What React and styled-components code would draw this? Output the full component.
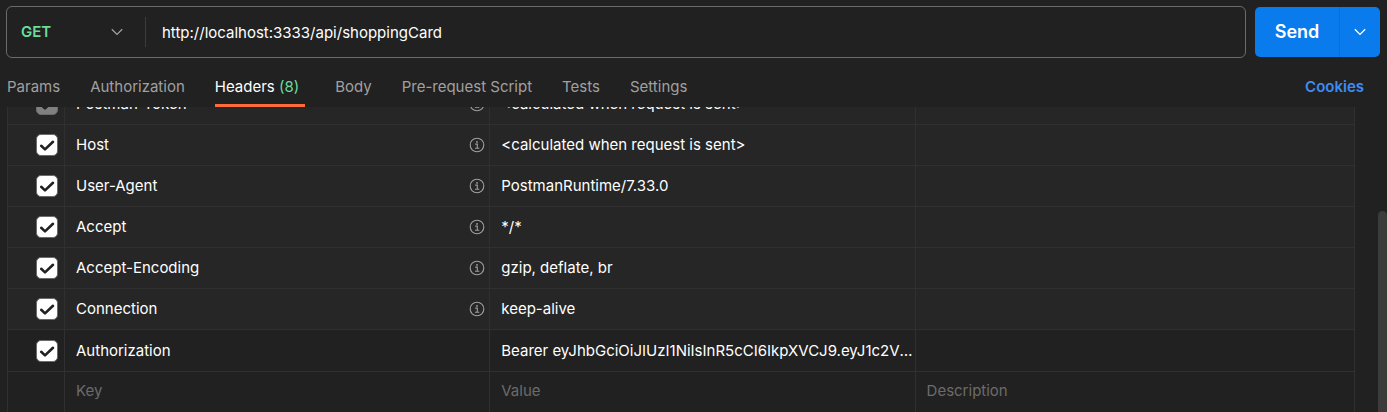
import React from "react";
import styled, { createGlobalStyle, css } from "styled-components";

const font = `Inter, "Liberation Sans", sans-serif`;
const line = "#303030";

const GlobalStyle = createGlobalStyle`
  *, *::before, *::after { box-sizing: border-box; }
  body { margin: 0; background: #212121; color: #fff; font: 15px/20px ${font}; }
  button, input, select { font: inherit; color: inherit; }
`;

const Page = styled.main`
  display: flex;
  flex-direction: column;
  height: 100vh;
  overflow: hidden;
`;

const RequestBar = styled.form`
  display: flex;
  align-items: center;
  gap: 9px;
  padding: 6px 7px 0 6px;
`;

const UrlBox = styled.div`
  display: flex;
  flex: 1;
  align-items: center;
  height: 52px;
  border: 1px solid #6b6b6b;
  border-radius: 6px;
`;

const MethodPicker = styled.div`
  display: grid;
  align-items: center;
  width: 139px;
  height: 30px;
  border-right: 1px solid #3c3c3c;

  > * { grid-area: 1 / 1; }
  > svg { justify-self: end; margin-right: 22px; pointer-events: none; }
`;

const MethodSelect = styled.select`
  appearance: none;
  height: 30px;
  padding: 0 14px;
  border: 0;
  outline: 0;
  background: transparent;
  color: #6bdd9a;
  font-weight: 600;
`;

const UrlInput = styled.input`
  flex: 1;
  min-width: 0;
  height: 30px;
  padding: 0 16px;
  border: 0;
  outline: 0;
  background: transparent;
`;

const SendGroup = styled.div`
  display: flex;
  height: 50px;
  border-radius: 5px;
  overflow: hidden;
`;

const SendButton = styled.button`
  width: 84px;
  padding: 0;
  border: 0;
  background: #097bed;
  font-size: 18px;
  font-weight: 600;
`;

const SendMenuButton = styled.button`
  display: grid;
  place-items: center;
  width: 41px;
  padding: 0;
  border: 0;
  border-left: 1px solid #0a6fd4;
  background: #097bed;
`;

const TabBar = styled.div`
  display: flex;
  align-items: flex-start;
  justify-content: space-between;
  padding: 19px 23px 0 7px;
`;

const Tabs = styled.nav`
  display: flex;
  gap: 30px;
`;

const Tab = styled.button`
  padding: 0 0 7px;
  border: 0;
  border-bottom: 3px solid transparent;
  background: none;
  line-height: 20px;
  color: #a0a0a0;
  ${(p) =>
    p.$active &&
    css`
      padding-right: 6px;
      border-color: #ff6c37;
      color: #fff;
    `}
`;

const Count = styled.span`
  color: #6bdd9a;
`;

const CookiesLink = styled.a`
  color: #3d8df5;
  font-weight: 600;
  text-decoration: none;
`;

const ScrollArea = styled.section`
  display: flex;
  flex: 1;
  min-height: 0;
  overflow: hidden;
  padding-left: 7px;
`;

const ScrollClip = styled.div`
  display: flex;
  flex: 1;
  overflow: hidden;
`;

const TableHolder = styled.div`
  flex: 1;
  min-width: 0;
  margin: -23px 23px 0 0;
`;

const Track = styled.div`
  width: 9px;
  padding-top: 104px;
`;

const Thumb = styled.div`
  height: 100%;
  border-radius: 5px 5px 0 0;
  background: #3c3c3c;
`;

const Table = styled.table`
  width: 100%;
  table-layout: fixed;
  border-collapse: separate;
  border-spacing: 0;
`;

const CheckCol = styled.col`
  width: 58px;
`;

const TextCol = styled.col`
  width: 31.55%;
`;

const Row = styled.tr`
  height: ${(p) => (p.$custom ? 42 : 41)}px;
  background: ${(p) => (p.$generated ? "#262626" : "#212121")};
`;

const Cell = styled.td`
  padding: 0 2px 0 11px;
  border-right: 1px solid ${line};
  border-bottom: 1px solid ${line};
  overflow: hidden;
  text-overflow: ellipsis;
  white-space: nowrap;
`;

const CheckCell = styled(Cell)`
  padding: 0 7px 0 28px;
  border-left: 1px solid ${line};
`;

const EntryCell = styled(Cell)`
  padding-bottom: 3px;
`;

const KeyLine = styled.div`
  display: flex;
  align-items: center;
  justify-content: space-between;

  > svg { margin-right: 2px; }
`;

const CheckHolder = styled.div`
  display: grid;
  place-items: center;
  width: 22px;

  > * { grid-area: 1 / 1; }
  > svg { pointer-events: none; }
`;

const CheckBox = styled.input`
  appearance: none;
  display: block;
  width: 22px;
  height: 22px;
  margin: 0;
  border: 1px solid #6b6b6b;
  border-radius: 5px;
  background: #fff;

  &:disabled { background: #808080; }
`;

const CellInput = styled.input`
  display: block;
  width: 100%;
  height: 20px;
  padding: 0;
  border: 0;
  outline: 0;
  background: transparent;

  &::placeholder { color: #6b6b6b; opacity: 1; }
`;

const Chevron = ({ color }) => (
  <svg width="12" height="8" viewBox="0 0 12 8" fill="none" stroke={color} strokeWidth="1.3" aria-hidden="true">
    <path d="M0.8 1.2 6 6.4l5.2-5.2" />
  </svg>
);

const Tick = () => (
  <svg width="16" height="14" viewBox="0 0 16 14" fill="none" stroke="#212121" strokeWidth="2.6" strokeLinecap="round" strokeLinejoin="round" aria-hidden="true">
    <path d="M2.2 7.8 6 11.4l8-7.6" />
  </svg>
);

const Info = () => (
  <svg width="16" height="16" viewBox="0 0 16 16" fill="none" stroke="#a0a0a0" strokeWidth="1.1" aria-hidden="true">
    <circle cx="8" cy="8" r="6.8" />
    <path d="M6.2 7.1h2.1v4.2M6 11.3h4.3" />
    <circle cx="8" cy="4.9" r="0.9" fill="#a0a0a0" stroke="none" />
  </svg>
);

const tabs = ["Params", "Authorization", "Headers", "Body", "Pre-request Script", "Tests", "Settings"];

const headers = [
  { name: "Postman-Token", value: "<calculated when request is sent>", generated: true, locked: true },
  { name: "Host", value: "<calculated when request is sent>", generated: true },
  { name: "User-Agent", value: "PostmanRuntime/7.33.0", generated: true },
  { name: "Accept", value: "*/*", generated: true },
  { name: "Accept-Encoding", value: "gzip, deflate, br", generated: true },
  { name: "Connection", value: "keep-alive", generated: true },
  { name: "Authorization", value: "Bearer eyJhbGciOiJIUzI1NiIsInR5cCI6IkpXVCJ9.eyJ1c2VySWQiOiIxIn0" },
];

function HeaderRow({ name, value, generated, locked }) {
  const id = `header-${name}`;
  return (
    <Row $generated={generated} $custom={!generated}>
      <CheckCell>
        <CheckHolder>
          <CheckBox type="checkbox" defaultChecked disabled={locked} aria-labelledby={id} />
          <Tick />
        </CheckHolder>
      </CheckCell>
      <Cell>
        <KeyLine>
          <span id={id}>{name}</span>
          {generated && <Info />}
        </KeyLine>
      </Cell>
      <Cell>{value}</Cell>
      <Cell />
    </Row>
  );
}

export default function App() {
  return (
    <Page>
      <GlobalStyle />
      <RequestBar onSubmit={(e) => e.preventDefault()}>
        <UrlBox>
          <MethodPicker>
            <MethodSelect aria-label="Method" defaultValue="GET">
              <option>GET</option>
              <option>POST</option>
              <option>PUT</option>
              <option>DELETE</option>
            </MethodSelect>
            <Chevron color="#a0a0a0" />
          </MethodPicker>
          <UrlInput aria-label="Request URL" defaultValue="http://localhost:3333/api/shoppingCard" />
        </UrlBox>
        <SendGroup>
          <SendButton type="submit">Send</SendButton>
          <SendMenuButton type="button" aria-label="Send options">
            <Chevron color="#fff" />
          </SendMenuButton>
        </SendGroup>
      </RequestBar>
      <TabBar>
        <Tabs>
          {tabs.map((t) => (
            <Tab key={t} type="button" $active={t === "Headers"}>
              {t}
              {t === "Headers" && <Count> (8)</Count>}
            </Tab>
          ))}
        </Tabs>
        <CookiesLink href="#cookies">Cookies</CookiesLink>
      </TabBar>
      <ScrollArea>
        <ScrollClip>
          <TableHolder>
            <Table>
              <colgroup>
                <CheckCol />
                <TextCol />
                <TextCol />
                <col />
              </colgroup>
              <tbody>
                {headers.map((h) => (
                  <HeaderRow key={h.name} {...h} />
                ))}
                <Row>
                  <CheckCell />
                  <EntryCell><CellInput placeholder="Key" aria-label="Key" /></EntryCell>
                  <EntryCell><CellInput placeholder="Value" aria-label="Value" /></EntryCell>
                  <EntryCell><CellInput placeholder="Description" aria-label="Description" /></EntryCell>
                </Row>
              </tbody>
            </Table>
          </TableHolder>
        </ScrollClip>
        <Track>
          <Thumb />
        </Track>
      </ScrollArea>
    </Page>
  );
}
